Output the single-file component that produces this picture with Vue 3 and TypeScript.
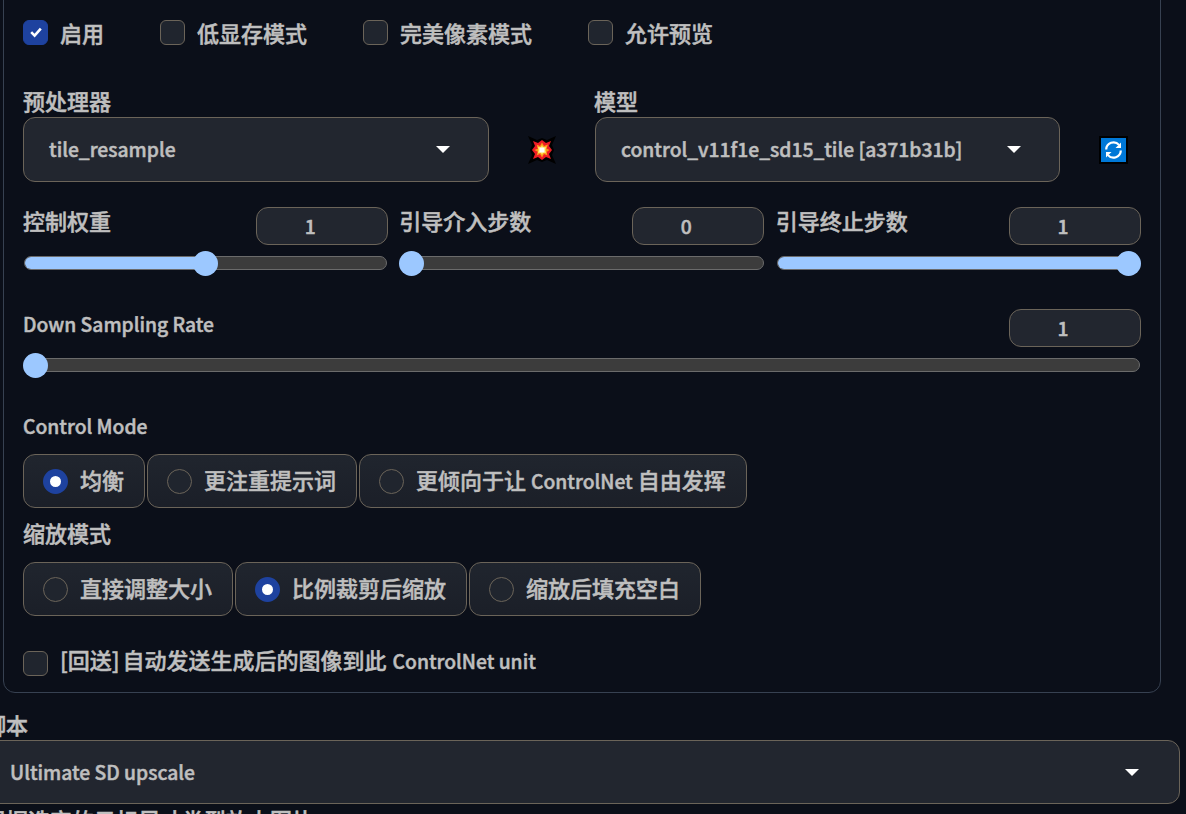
<script setup lang="ts">
interface Radio { label: string; on?: boolean; latin?: string; tail?: string }
const checks = ['低显存模式', '完美像素模式', '允许预览']
const sliders = [
  { label: '控制权重', value: '1', pct: 50 },
  { label: '引导介入步数', value: '0', pct: 0 },
  { label: '引导终止步数', value: '1', pct: 100 },
]
const controlModes: Radio[] = [
  { label: '均衡', on: true },
  { label: '更注重提示词' },
  { label: '更倾向于让 ', latin: 'ControlNet', tail: ' 自由发挥' },
]
const resizeModes: Radio[] = [
  { label: '直接调整大小' },
  { label: '比例裁剪后缩放', on: true },
  { label: '缩放后填充空白' },
]
</script>

<template>
  <div class="page">
    <section class="panel">
      <div class="checks">
        <label class="check"><span class="box on"><svg viewBox="0 0 16 16" width="16" height="16"><path d="M3.2 8.2 6.600 11.600 12.800 4.600" fill="none" stroke="#fff" stroke-width="2.600"/></svg></span>启用</label>
        <label v-for="c in checks" :key="c" class="check"><span class="box"></span>{{ c }}</label>
      </div>

      <div class="selects">
        <div class="field pre">
          <div class="lbl">预处理器</div>
          <div class="select"><span class="lat">tile_resample</span><i class="caret"></i></div>
        </div>
        <div class="emoji-cell">
          <svg width="28" height="28" viewBox="0 0 28 28">
            <path d="M0 0 9 4 14 2 19 4 28 0 24 9 26 14 24 19 28 28 19 24 14 26 9 24 0 28 4 19 2 14 4 9Z" fill="#000"/>
            <path d="M5 5 10 7 14 4 18 7 23 5 21 10 24 14 21 18 23 23 18 21 14 24 10 21 5 23 7 18 4 14 7 10Z" fill="#ee1c25"/>
            <path d="M14 6.500 16 10 20 8.500 18.500 12.500 21.500 14 18.500 16 19.500 19.500 16 18 14 21.500 12 18 8.500 19.500 10 16 6.500 14 10 12.500 8.500 8.500 12 10Z" fill="#fb9b19"/>
            <path d="M14 9 15.500 11.500 18.500 10.500 17.500 14 18.500 17.500 15.500 16.500 14 19 12.500 16.500 9.500 17.500 10.500 14 9.500 10.500 12.500 11.500Z" fill="#fde05b"/>
            <rect x="11.500" y="11.500" width="5" height="5" fill="#fff"/>
          </svg>
        </div>
        <div class="field model">
          <div class="lbl">模型</div>
          <div class="select"><span class="lat">control_v11f1e_sd15_tile [a371b31b]</span><i class="caret"></i></div>
        </div>
        <div class="refresh-cell">
          <svg width="29" height="28" viewBox="0 0 29 28">
            <rect width="29" height="28" fill="#000"/>
            <rect x="2" y="2" width="25" height="24" fill="#0078d7"/>
            <path d="M7.200 13.500a7.300 7.300 0 0 1 12.800-4.600" fill="none" stroke="#fff" stroke-width="2.200"/>
            <path d="M21.800 14.500a7.300 7.300 0 0 1-12.800 4.600" fill="none" stroke="#fff" stroke-width="2.200"/>
            <path d="M22 6.500v5.500h-5.500zM7 21.500v-5.500h5.500z" fill="#fff"/>
          </svg>
        </div>
      </div>

      <div class="slider-row">
        <div v-for="s in sliders" :key="s.label" class="slider">
          <div class="slider-head"><span class="lbl">{{ s.label }}</span><span class="num lat">{{ s.value }}</span></div>
          <div class="track">
            <div class="fill" :style="{ width: s.pct + '%' }"></div>
            <div class="thumb" :style="{ left: s.pct + '%' }"></div>
          </div>
        </div>
      </div>

      <div class="slider wide">
        <div class="slider-head"><span class="lbl lat">Down Sampling Rate</span><span class="num lat">1</span></div>
        <div class="track"><div class="thumb" style="left: 0%"></div></div>
      </div>

      <div class="lbl lat mode-label">Control Mode</div>
      <div class="radios first">
        <label v-for="r in controlModes" :key="r.label" class="radio"><span class="dot" :class="{ on: r.on }"></span><span class="radio-text">{{ r.label }}<span v-if="r.latin" class="lat">{{ r.latin }}</span>{{ r.tail }}</span></label>
      </div>

      <div class="lbl resize-label">缩放模式</div>
      <div class="radios second">
        <label v-for="r in resizeModes" :key="r.label" class="radio"><span class="dot" :class="{ on: r.on }"></span><span class="radio-text">{{ r.label }}</span></label>
      </div>

      <label class="check loop"><span class="box"></span><span class="loop-text">[回送] 自动发送生成后的图像到此 <span class="lat">ControlNet unit</span></span></label>
    </section>

    <div class="script">
      <div class="lbl script-label">脚本</div>
      <div class="select script-select"><span class="lat">Ultimate SD upscale</span><i class="caret"></i></div>
      <div class="lbl cut">根据选定的目标尺寸类型放大图片</div>
    </div>
  </div>
</template>

<style>
html, body { margin: 0; background: #0b0f19; overflow: hidden; }
</style>

<style scoped>
.page {
  width: 1186px;
  height: 814px;
  overflow: hidden;
  background: #0b0f19;
  color: #bfbfbf;
  font-family: "Noto Sans CJK SC", sans-serif;
  font-size: 22px;
  font-weight: 500;
  -webkit-text-stroke: 0.5px #bfbfbf;
}
.lat { font-size: 19.3px; }
.panel {
  box-sizing: border-box;
  margin: -20px 0 0 3px;
  width: 1158px;
  height: 713px;
  padding: 35px 19px 0;
  border: 1px solid #374151;
  border-radius: 12px;
}
.checks { display: flex; height: 32px; align-items: center; gap: 56px; }
.check { display: flex; align-items: center; line-height: 32px; }
.box {
  box-sizing: border-box;
  width: 25px;
  height: 25px;
  margin-right: 12px;
  border: 1px solid #6b6459;
  border-radius: 6px;
  background: #20252e;
  display: flex;
  align-items: center;
  justify-content: center;
  flex: none;
}
.box.on { background: #1e429f; border-color: #1e429f; }
.lbl { line-height: 30px; }
.selects { display: flex; margin-top: 39px; }
.field { flex: none; }
.field .lbl { line-height: 26px; margin-bottom: 4px; }
.field.pre { width: 466px; }
.field.model { width: 465px; }
.field.model .lbl { margin-left: -1px; }
.emoji-cell { width: 106px; flex: none; display: flex; align-items: center; justify-content: center; padding-top: 31px; }
.refresh-cell { flex: none; margin-left: 39px; display: flex; align-items: center; padding-top: 31px; }
.select {
  box-sizing: border-box;
  height: 65px;
  border: 1px solid #6b6459;
  border-radius: 12px;
  background: #22262f;
  padding: 0 38px 0 25px;
  display: flex;
  align-items: center;
  justify-content: space-between;
  white-space: nowrap;
}
.field .select .lat { margin-bottom: 2px; }
.caret {
  width: 0;
  height: 0;
  border-left: 7px solid transparent;
  border-right: 7px solid transparent;
  border-top: 7px solid #fff;
}
.slider-row { display: flex; gap: 11px; margin-top: 25px; }
.slider-row .slider { flex: 1; }
.slider-head { display: flex; justify-content: space-between; align-items: flex-start; height: 38px; }
.slider-head .lbl { line-height: 26px; }
.slider-head .lbl.lat { line-height: 30px; }
.slider-row .slider:nth-child(2) .num { margin-right: 1px; padding-right: 23px; }
.num {
  box-sizing: border-box;
  width: 132px;
  height: 38px;
  padding-right: 24px;
  border: 1px solid #6b6459;
  border-radius: 12px;
  background: #22262f;
  display: flex;
  align-items: center;
  justify-content: center;
}
.track {
  position: relative;
  box-sizing: border-box;
  height: 14px;
  margin: 11px 1px 0;
  border: 1px solid #6b6b6b;
  border-radius: 7px;
  background: #3c3c3c;
}
.fill { height: 100%; border-radius: 7px; background: #9cc8ff; }
.thumb {
  position: absolute;
  top: 50%;
  width: 25px;
  height: 25px;
  margin-top: -12.500px;
  margin-left: -2px;
  border-radius: 50%;
  background: #9cc8ff;
}
.slider-row .slider:nth-child(1) .thumb { margin-left: -13px; }
.slider-row .slider:nth-child(3) .thumb { margin-left: -23px; }
.wide { margin-top: 39px; }
.mode-label { margin-top: 39px; }
.radios { display: flex; gap: 2px; }
.radios.first { margin-top: 13px; }
.radios.second { margin-top: 15px; }
.radio {
  box-sizing: border-box;
  height: 54px;
  padding: 0 20px 0 19px;
  display: flex;
  align-items: center;
  border: 1px solid #6b6459;
  border-radius: 12px;
  background: linear-gradient(#20252e, #1b1f28);
  white-space: nowrap;
}
.radio-text { white-space: pre; margin-bottom: 4px; }
.dot {
  box-sizing: border-box;
  width: 25px;
  height: 25px;
  margin-right: 12px;
  border: 1px solid #6b6459;
  border-radius: 50%;
  background: #20252e;
  flex: none;
}
.dot.on { border: 7px solid #1e429f; background: #fff; }
.resize-label { margin-top: 9px; }
.loop { margin-top: 27px; }
.loop-text { white-space: pre; word-spacing: -2px; margin-bottom: 6px; }
.loop-text .lat { word-spacing: 0; margin-left: 3px; }
.script { margin-left: -16px; width: 1196px; margin-top: 17px; }
.script-label { line-height: 28px; margin-bottom: 2px; }
.script-select { height: 64px; padding-right: 40px; }
.cut { white-space: nowrap; }
</style>
